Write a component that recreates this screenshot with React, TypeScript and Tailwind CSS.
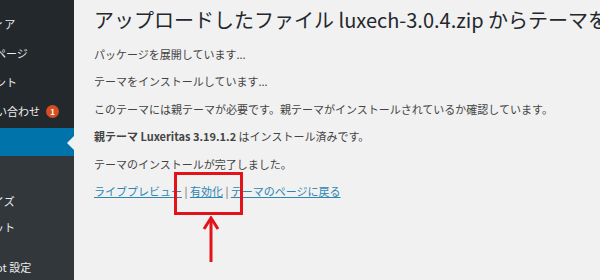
const font = {
  fontFamily: '"Noto Sans CJK JP", "Noto Sans", sans-serif',
};

function MenuItem({
  label,
  offset,
  badge,
}: {
  label: string;
  offset: string;
  badge?: string;
}) {
  return (
    <div className="flex items-center h-[29px] whitespace-nowrap text-[11px] text-[#eeeeee]">
      <span className={offset}>{label}</span>
      {badge && (
        <span className="ml-[6px] w-[13px] h-[13px] rounded-full bg-[#d54e21] text-white text-[8px] font-bold flex items-center justify-center shrink-0">
          {badge}
        </span>
      )}
    </div>
  );
}

export default function App() {
  return (
    <div
      className="relative flex w-[600px] h-[280px] overflow-hidden bg-[#f1f1f1]"
      style={font}
    >
      {/* admin menu, cropped on the left */}
      <aside className="w-[74px] shrink-0 flex flex-col overflow-hidden bg-[#23282d]">
        <div className="pt-[10px]">
          <MenuItem label="メディア" offset="ml-[-28px]" />
          <MenuItem label="固定ページ" offset="ml-[-27px]" />
          <MenuItem label="コメント" offset="ml-[-27px]" />
          <MenuItem label="お問い合わせ" offset="ml-[-26px]" badge="1" />
        </div>
        <div className="relative h-[28px] mt-[2px] bg-[#0073aa] text-[11px] text-white flex items-center whitespace-nowrap">
          <span className="ml-[-40px]">外観</span>
          <span className="absolute right-0 top-[8px] w-0 h-0 border-y-[7px] border-y-transparent border-r-[7px] border-r-[#f1f1f1]" />
        </div>
        <div className="flex-1 bg-[#32373c] pt-[6px] text-[11px] text-[#eeeeee] whitespace-nowrap">
          <div className="h-[26px] flex items-center">
            <span className="ml-[-60px]">テーマ</span>
          </div>
          <div className="h-[26px] flex items-center">
            <span className="ml-[-51px]">カスタマイズ</span>
          </div>
          <div className="h-[26px] flex items-center">
            <span className="ml-[-51px]">ウィジェット</span>
          </div>
          <div className="h-[14px]" />
          <div className="h-[26px] flex items-center">
            <span className="ml-[-60px]">Luxeritas Bot 設定</span>
          </div>
        </div>
      </aside>

      {/* main content */}
      <main className="flex-1 min-w-0 pl-[20px] pt-[6px] text-[11px] text-[#444444]">
        <h1 className="text-[20px] leading-[28px] text-[#23282d] whitespace-nowrap">
          アップロードしたファイル luxech-3.0.4.zip からテーマをインストールしています
        </h1>
        <div className="mt-[12px] flex flex-col gap-[11.4px] leading-[16px] whitespace-nowrap">
          <p>パッケージを展開しています...</p>
          <p>テーマをインストールしています...</p>
          <p>このテーマには親テーマが必要です。親テーマがインストールされているか確認しています。</p>
          <p>
            <strong className="font-bold">親テーマ Luxeritas 3.19.1.2</strong>{" "}
            はインストール済みです。
          </p>
          <p>テーマのインストールが完了しました。</p>
          <p>
            <a className="text-[#2e86b2] underline">ライブプレビュー</a>{" "}
            <span className="text-[#666]">|</span>{" "}
            <a className="text-[#2e86b2] underline">有効化</a>{" "}
            <span className="text-[#666]">|</span>{" "}
            <a className="text-[#2e86b2] underline">テーマのページに戻る</a>
          </p>
        </div>
      </main>

      {/* annotation: red box and arrow */}
      <div className="absolute left-[174px] top-[172px] w-[69px] h-[43px] border-[3px] border-[#e3131b]" />
      <svg
        className="absolute left-[202px] top-[216px]"
        width="18"
        height="48"
        viewBox="0 0 18 48"
      >
        <path d="M9 3 V46" stroke="#e3131b" strokeWidth="3" fill="none" />
        <path
          d="M2 13 L9 2 L16 13"
          stroke="#e3131b"
          strokeWidth="3"
          fill="none"
          strokeLinejoin="miter"
        />
      </svg>
    </div>
  );
}
